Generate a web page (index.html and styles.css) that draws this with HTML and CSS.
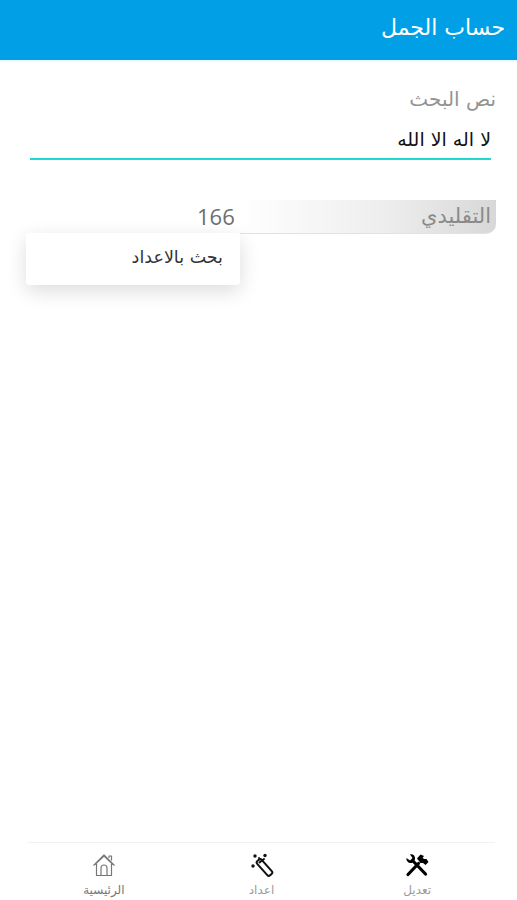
FILE: index.html
```html
<!DOCTYPE html>
<html lang="ar" dir="rtl">
<head>
<meta charset="utf-8">
<title>حساب الجمل</title>
<link rel="stylesheet" href="styles.css">
</head>
<body>
<div class="app">
  <header class="appbar"><h1 class="title">حساب الجمل</h1></header>
  <main class="content">
    <div class="field">
      <div class="field-label">نص البحث</div>
      <div class="field-value">لا اله الا الله</div>
    </div>
    <div class="result">
      <div class="result-row">
        <span class="result-name">التقليدي</span>
        <span class="result-num" dir="ltr">166</span>
      </div>
      <div class="menu"><span class="menu-item">بحث بالاعداد</span></div>
    </div>
  </main>
  <nav class="tabs">
    <div class="tab">
      <svg class="tab-icon" viewBox="0 0 24 24"><g fill="none" stroke="#000" stroke-linecap="round"><path d="M3 21.500 13.500 10.500" stroke-width="3.200"/><path d="M20.500 21 8 8" stroke-width="3.200"/></g><path fill="#000" d="M1.500 5 5 7.500 7.500 5 5 1.500C8 .5 10.500 3 10 6.500L7 10C3.500 10.500 1 8 1.500 5zM12 5.500 15.500 1.500 19 3 17.500 5 19.500 6 21.500 6 23.500 9 20.500 12 18 10 15.500 10z"/></svg>
      <span class="tab-label muted">تعديل</span>
    </div>
    <div class="tab">
      <svg class="tab-icon" viewBox="0 0 24 24" fill="none" stroke="#111" stroke-linecap="round"><rect x="11.500" y="5" width="6" height="19" rx="2" transform="rotate(-42 14.500 14.500)" stroke-width="2"/><path d="M9.500 9.500 14 6" stroke-width="2"/><g fill="#111" stroke="none"><circle cx="5" cy="3" r="1.700"/><circle cx="15" cy="2.500" r="1.700"/><circle cx="3" cy="13" r="1.700"/><circle cx="9" cy="5" r="1"/></g></svg>
      <span class="tab-label muted">اعداد</span>
    </div>
    <div class="tab">
      <svg class="tab-icon" viewBox="0 0 24 24" fill="none" stroke="#777" stroke-width="1.200" stroke-linejoin="round"><path d="M1.500 12.500 12 2l10.500 10.500M3 11.500l9-8.500 9 8.500M4.500 11v11.500h15V11M9 22.500V15a3 3 0 0 1 6 0v7.500M17 5V3h2.500v4.500"/></svg>
      <span class="tab-label">الرئيسية</span>
    </div>
  </nav>
</div>
</body>
</html>
```
FILE: styles.css
```css
* { box-sizing: border-box; }
html, body { margin: 0; padding: 0; background: #fff; }
body { font-family: "DejaVu Sans", "Noto Sans", sans-serif; }
.app { width: 517px; height: 900px; display: flex; flex-direction: column; overflow: hidden; }
.appbar { height: 60px; flex: none; background: #009fe6; display: flex; align-items: center; padding: 0 12px; box-shadow: 0 1px 3px rgba(0, 120, 200, .12); }
.title { margin: 0; font-size: 22px; font-weight: 400; color: #fff; line-height: 1; padding-bottom: 4px; }
.content { flex: 1; padding: 0 21px 0 0; }
.field { margin-top: 28px; width: 466px; }
.field-label { font-size: 20px; line-height: 22px; color: #949494; height: 22px; }
.field-value { margin-top: 19px; margin-right: 5px; height: 31px; border-bottom: 2px solid #1fd8d0; font-size: 19px; line-height: 20px; color: #111; }
.result { position: relative; margin-top: 40px; width: 496px; }
.result-row { width: 256px; height: 34px; display: flex; align-items: center; border-bottom: 1px solid #e2e2e2; background: linear-gradient(to left, #d8d8d8, #eeeeee 45%, #ffffff 100%); border-bottom-right-radius: 10px; padding: 0 5px 2px 0; position: relative; }
.result-name { font-size: 21px; color: #8a8a8a; }
.result-num { font-family: "Open Sans", sans-serif; font-size: 22px; color: #6e6e6e; position: absolute; left: -43px; top: 1px; line-height: 30px; }
.menu { position: absolute; top: 33px; left: 26px; width: 214px; height: 52px; background: #fff; border-radius: 3px; box-shadow: 0 6px 20px rgba(0, 0, 0, .14); display: flex; align-items: center; padding: 0 17px 4px; }
.menu-item { font-size: 17.500px; color: #333; }
.tabs { height: 58px; flex: none; margin: 0 22px 0 28px; border-top: 1px solid #f2f2f2; display: grid; grid-template-columns: 1fr 1fr 1fr; padding: 10px 0 0; }
.tab { display: flex; flex-direction: column; align-items: center; gap: 5px; }
.tab:nth-child(3) { padding-right: 4px; }
.tab-icon { width: 24px; height: 24px; display: block; }
.tab-label { font-size: 12px; line-height: 16px; color: #777; }
.tab-label.muted { color: #999; }
```
